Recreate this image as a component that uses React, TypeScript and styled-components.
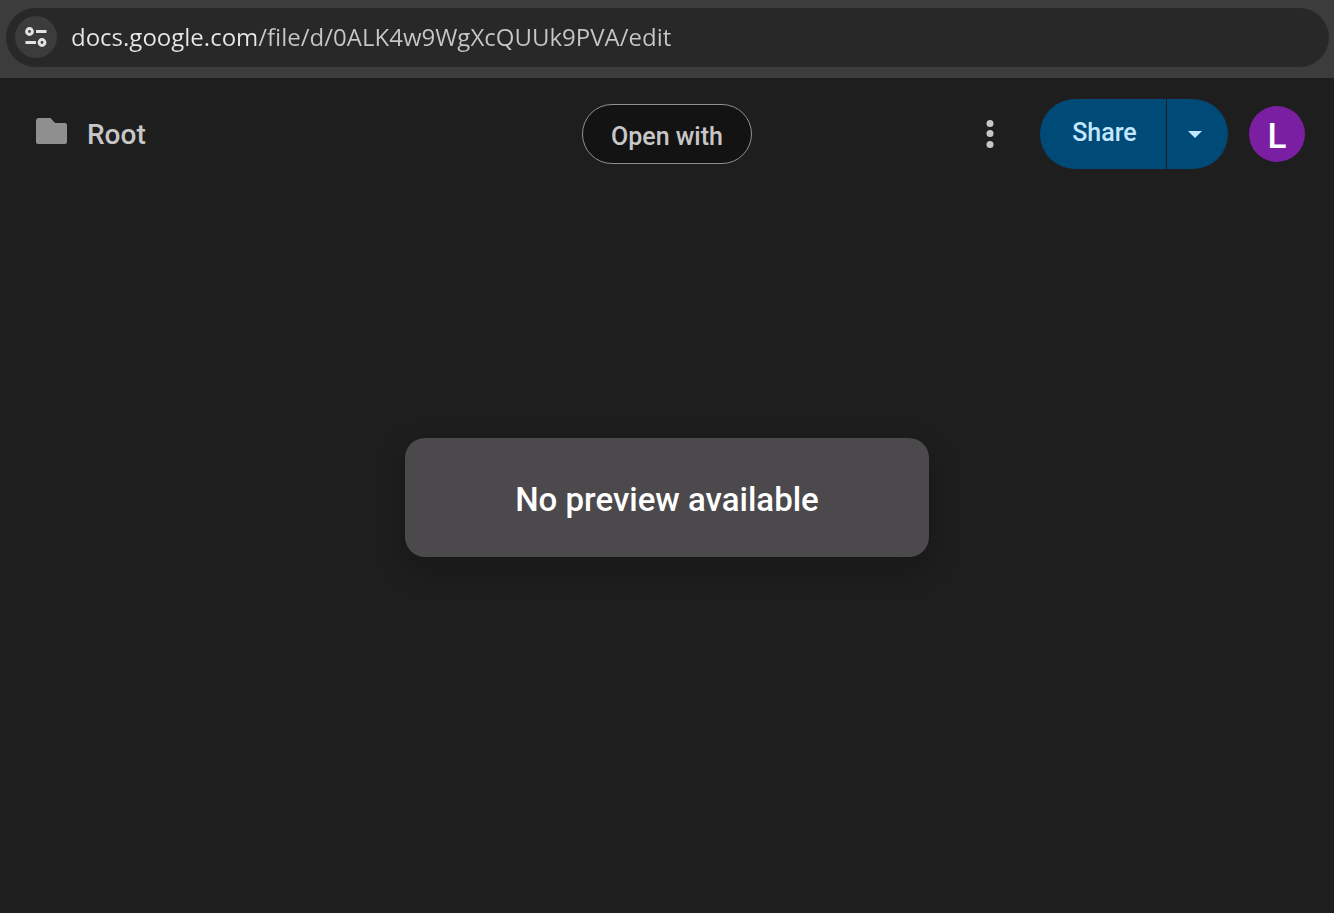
import React from "react";
import styled, { createGlobalStyle } from "styled-components";

const GlobalStyle = createGlobalStyle`
  *, *::before, *::after { box-sizing: border-box; }
  body {
    margin: 0;
    background: #1e1e1e;
    font-family: Roboto, "Liberation Sans", sans-serif;
  }
  button { font: inherit; border: 0; margin: 0; padding: 0; cursor: pointer; }
`;

const Page = styled.div`
  display: flex;
  flex-direction: column;
  min-height: 100vh;
`;

const AddressBar = styled.div`
  padding: 8px 5px 11px 6px;
  background: #3c3c3c;
`;

const AddressField = styled.div`
  display: flex;
  align-items: center;
  gap: 14px;
  height: 59px;
  padding: 0 32px 1px 9px;
  border-radius: 30px;
  background: #282828;
`;

const SiteInfoButton = styled.button`
  display: grid;
  place-items: center;
  flex: none;
  width: 42px;
  height: 42px;
  border-radius: 50%;
  background: #3c3c3c;
`;

const UrlInput = styled.input`
  flex: 1;
  min-width: 0;
  height: 40px;
  padding: 0;
  border: 0;
  outline: 0;
  font: 24px/40px "Open Sans", "Noto Sans", sans-serif;
  color: transparent;
  caret-color: #e6e6e6;
  background: linear-gradient(90deg, #e8e8e8 187px, #c7c7c7 187px);
  background-clip: text;
`;

const Header = styled.header`
  display: grid;
  grid-template-columns: 1fr auto 1fr;
  align-items: center;
  padding: 21px 29px;
`;

const FileTitle = styled.div`
  display: flex;
  align-items: center;
  gap: 20px;
  padding-left: 7px;
`;

const FileName = styled.h1`
  margin: 0;
  padding-top: 2px;
  font-size: 28px;
  font-weight: 500;
  line-height: 32px;
  color: #c7c7c7;
`;

const OpenWithButton = styled.button`
  height: 60px;
  padding: 4px 28px 0;
  border: 1px solid #8e918f;
  border-radius: 31px;
  background: #131313;
  color: #c7c7c7;
  font-size: 25px;
  font-weight: 500;
`;

const Actions = styled.div`
  display: flex;
  align-items: center;
  justify-content: flex-end;
`;

const MoreButton = styled.button`
  display: grid;
  place-items: center;
  width: 40px;
  height: 40px;
  margin-right: 30px;
  background: transparent;
`;

const ShareGroup = styled.div`
  display: flex;
  gap: 1px;
  margin-right: 21px;
`;

const ShareButton = styled.button`
  width: 126px;
  height: 70px;
  padding: 0 0 3px 3px;
  border-radius: 35px 0 0 35px;
  background: #004a77;
  color: #c2e7ff;
  font-size: 25px;
  font-weight: 500;
`;

const ShareMenuButton = styled.button`
  display: flex;
  align-items: center;
  width: 61px;
  height: 70px;
  padding-left: 21px;
  border-radius: 0 35px 35px 0;
  background: #004a77;
`;

const Avatar = styled.button`
  width: 56px;
  height: 56px;
  padding-top: 4px;
  border-radius: 50%;
  background: #7b1fa2;
  color: #fff;
  font-size: 35px;
  font-weight: 500;
`;

const Preview = styled.main`
  flex: 1;
  display: flex;
  align-items: center;
  justify-content: center;
  padding-bottom: 108px;
`;

const Notice = styled.p`
  margin: 0;
  padding: 42px 110px 37px;
  border-radius: 20px;
  background: #4c494c;
  box-shadow: 0 11px 28px 4px rgba(0, 0, 0, 0.2);
  color: #fff;
  font-size: 33px;
  font-weight: 500;
  line-height: 40px;
`;

export default function App() {
  return (
    <Page>
      <GlobalStyle />
      <AddressBar>
        <AddressField>
          <SiteInfoButton aria-label="View site information">
            <svg width="22" height="20" viewBox="0 0 22 20" fill="none" stroke="#e3e3e3" strokeWidth="3">
              <circle cx="4.5" cy="4.5" r="2.9" />
              <circle cx="17" cy="15.5" r="2.9" />
              <path d="M11 4.5h10.5M.5 15.5H11" />
            </svg>
          </SiteInfoButton>
          <UrlInput
            type="text"
            aria-label="Address"
            spellCheck={false}
            defaultValue="docs.google.com/file/d/0ALK4w9WgXcQUUk9PVA/edit"
          />
        </AddressField>
      </AddressBar>
      <Header>
        <FileTitle>
          <svg width="31" height="32" viewBox="0 0 31 32" fill="#8f8f8f" aria-hidden="true">
            <path d="M3 0h11.5l4.5 5h10a2 2 0 0 1 2 2v17a2 2 0 0 1-2 2H2a2 2 0 0 1-2-2V3a3 3 0 0 1 3-3z" />
          </svg>
          <FileName>Root</FileName>
        </FileTitle>
        <OpenWithButton>Open with</OpenWithButton>
        <Actions>
          <MoreButton aria-label="More actions">
            <svg width="8" height="28" viewBox="0 0 8 28" fill="#c7c7c7">
              <circle cx="4" cy="3.5" r="3.5" />
              <circle cx="4" cy="13.5" r="3.5" />
              <circle cx="4" cy="24.5" r="3.5" />
            </svg>
          </MoreButton>
          <ShareGroup>
            <ShareButton>Share</ShareButton>
            <ShareMenuButton aria-label="Share options">
              <svg width="14" height="7" viewBox="0 0 14 7" fill="#c2e7ff">
                <path d="M0 0h14L7 7z" />
              </svg>
            </ShareMenuButton>
          </ShareGroup>
          <Avatar aria-label="Account: L">L</Avatar>
        </Actions>
      </Header>
      <Preview>
        <Notice>No preview available</Notice>
      </Preview>
    </Page>
  );
}
